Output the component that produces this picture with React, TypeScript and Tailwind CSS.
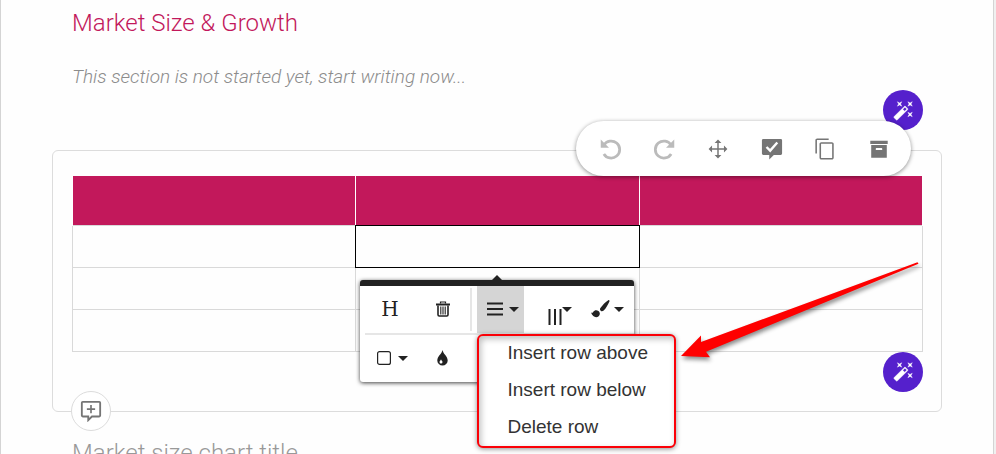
import type { ReactNode } from "react"

function Icon({ size, className, children }: { size: number; className?: string; children: ReactNode }) {
  return (
    <svg width={size} height={size} viewBox="0 0 24 24" fill="currentColor" className={className} aria-hidden="true">
      {children}
    </svg>
  )
}

function Caret() {
  return (
    <svg width="10" height="5" viewBox="0 0 10 5" fill="currentColor" aria-hidden="true">
      <path d="M0 0h10L5 5z" />
    </svg>
  )
}

function WandButton({ className }: { className: string }) {
  return (
    <button
      type="button"
      aria-label="Writing assistant"
      className={`absolute flex size-10 items-center justify-center rounded-full bg-[#5520cc] text-white ${className}`}
    >
      <Icon size={21}>
        <path
          d="M7.5 5.6 5 7l1.4-2.5L5 2l2.5 1.4L10 2 8.6 4.5 10 7 7.5 5.6M19.5 15.4 22 14l-1.4 2.5L22 19l-2.5-1.4L17 19l1.4-2.5L17 14l2.5 1.4M22 2l-1.4 2.5L22 7l-2.5-1.4L17 7l1.4-2.5L17 2l2.5 1.4L22 2M13.34 12.78l2.44-2.44-2.12-2.12-2.44 2.44 2.12 2.12M14.37 7.29l2.34 2.34c.39.37.39 1.02 0 1.41L5.04 22.71c-.39.39-1.04.39-1.41 0l-2.34-2.34c-.39-.37-.39-1.02 0-1.41L12.96 7.29c.39-.39 1.04-.39 1.41 0Z"
          stroke="currentColor"
          strokeWidth=".5"
        />
      </Icon>
    </button>
  )
}

const blockActions = [
  {
    label: "Undo",
    disabled: true,
    icon: (
      <>
        <path d="M4.2 7.8A9.300 9.300 0 1 1 4.200 17.400" fill="none" stroke="currentColor" strokeWidth="3" />
        <path d="M.8 1.500v9h9z" />
      </>
    ),
  },
  {
    label: "Redo",
    disabled: true,
    icon: (
      <>
        <path d="M19.8 7.8A9.300 9.300 0 1 0 19.800 17.400" fill="none" stroke="currentColor" strokeWidth="3" />
        <path d="M23.200 1.500v9h-9z" />
      </>
    ),
  },
  {
    label: "Move",
    icon: (
      <path d="M12.800 5.500v5.700h5.700V8.300L22.250 12l-3.750 3.700v-2.900h-5.700v5.700h2.900L12 22.250 8.300 18.500h2.900v-5.700H5.500v2.900L1.750 12 5.500 8.300v2.900h5.700V5.500H8.300L12 1.750l3.700 3.750z" />
    ),
  },
  {
    label: "Mark as done",
    icon: (
      <>
        <path d="M2.500 1h19a1.500 1.500 0 0 1 1.500 1.500v14.500a1.500 1.500 0 0 1-1.500 1.500H14L9 23.500v-5H2.500A1.500 1.500 0 0 1 1 17V2.500A1.500 1.500 0 0 1 2.500 1z" />
        <path d="m6 9.800 4 4 7.800-8.800" fill="none" stroke="#fff" strokeWidth="2.600" />
      </>
    ),
  },
  {
    label: "Copy",
    icon: (
      <path d="M16 .5H3.500c-1.100 0-2 .9-2 2V17h1.700V2.200H16V.5zm3.500 4H8c-1.100 0-2 .9-2 2V21.500c0 1.100.9 2 2 2h11.500c1.100 0 2-.9 2-2v-15c0-1.100-.9-2-2-2zm.3 17.300H7.700V6.200h12.100v15.600z" />
    ),
  },
  {
    label: "Archive",
    icon: (
      <path d="M2.500 3h19v3.500h-19V3m1 4.700h17V21.500h-17V7.700m5.500 3.300a.5.5 0 0 0-.5.5V13h7v-1.500a.5.5 0 0 0-.5-.5h-6Z" />
    ),
  },
]

function BlockToolbar() {
  return (
    <div
      role="toolbar"
      aria-label="Block actions"
      className="absolute -top-[30px] right-[30px] z-10 flex h-[55px] w-[335px] items-center justify-around rounded-full bg-white pr-[5px] pl-2 shadow-[0_1px_4px_rgba(0,0,0,0.45)]"
    >
      {blockActions.map((action) => (
        <button
          key={action.label}
          type="button"
          aria-label={action.label}
          disabled={action.disabled}
          className="flex size-8 items-center justify-center text-[#757575] disabled:text-[#bbbbbb]"
        >
          <Icon size={22}>{action.icon}</Icon>
        </button>
      ))}
    </div>
  )
}

function RowMenu() {
  return (
    <div className="absolute top-12 left-[117px] z-20">
      <div
        role="menu"
        className="flex w-[199px] flex-col gap-[7px] rounded-md border-2 border-[#fb0007] bg-white pt-[2px] pb-1 shadow-[0_1px_5px_rgba(0,0,0,0.45),inset_2px_3px_6px_rgba(0,0,0,0.25)]"
      >
        {["Insert row above", "Insert row below", "Delete row"].map((item) => (
          <button
            key={item}
            type="button"
            role="menuitem"
            className="h-[30px] pl-7 text-left font-['Liberation_Sans',Arial,sans-serif] text-[19px] leading-[30px] text-[#333]"
          >
            {item}
          </button>
        ))}
      </div>
      {/* Pointer to the menu */}
      <svg
        width="240"
        height="98"
        viewBox="0 0 240 98"
        className="pointer-events-none absolute -top-[73px] left-[204px] drop-shadow-[1px_3px_2px_rgba(0,0,0,0.45)]"
        aria-hidden="true"
      >
        <path d="M0 95 20 74.500v6.500L236.500 1.200l1 1.500L25 90.700l4 5.600z" fill="#fe0000" />
      </svg>
    </div>
  )
}

function TablePopup() {
  return (
    <div className="absolute inset-x-0 top-[54px] z-10 flex justify-center">
      <div
        role="toolbar"
        aria-label="Table"
        className="relative w-[274px] shrink-0 rounded-[3px] border-t-[6px] border-[#222] bg-white text-[#222] shadow-[0_1px_4px_rgba(0,0,0,0.75)]"
      >
        <svg width="10" height="5" viewBox="0 0 10 5" className="absolute -top-[11px] left-[132px]" aria-hidden="true">
          <path d="M0 5 5 0l5 5z" fill="#222" />
        </svg>

        <div className="flex h-[47px]">
          <button type="button" aria-label="Table header" className="w-[59px] font-['DejaVu_Serif',serif] text-xl">
            H
          </button>
          <button type="button" aria-label="Remove table" className="flex w-[47px] items-center justify-center">
            <svg width="14" height="16" viewBox="0 0 14 16" fill="none" stroke="currentColor" aria-hidden="true">
              <path d="M4.500 2.500V1h5v1.500" strokeWidth="1.200" />
              <path d="M0 3.500h14" strokeWidth="2" />
              <path d="M2 4.500v9.300q0 1.200 1.200 1.200h7.600q1.200 0 1.200-1.200V4.500" strokeWidth="1.600" />
              <path d="M4.800 5.500v8M7 5.500v8M9.200 5.500v8" strokeWidth="1.100" />
            </svg>
          </button>
          <div className="my-[2px] mr-[5px] ml-1 w-[2px] bg-[#e6e6e6]" />
          <button
            type="button"
            aria-label="Row"
            aria-expanded="true"
            className="flex w-[47px] items-center justify-center gap-[6px] bg-[#d5d5d5] pl-[5px]"
          >
            <svg width="16" height="14" viewBox="0 0 16 14" aria-hidden="true">
              <path d="M0 1.500h16M0 7h16M0 12.500h16" stroke="currentColor" strokeWidth="2.200" />
            </svg>
            <Caret />
          </button>
          <button type="button" aria-label="Column" className="ml-6 flex w-[28px] items-center">
            <svg width="14" height="16" viewBox="0 0 14 16" className="mt-4" aria-hidden="true">
              <path d="M1.500 0v16M7 0v16M12.500 0v16" stroke="currentColor" strokeWidth="2" />
            </svg>
            <Caret />
          </button>
          <button type="button" aria-label="Table style" className="ml-[14px] flex items-center gap-1">
            <svg width="20" height="18" viewBox="0 0 20 18" fill="currentColor" aria-hidden="true">
              <path d="M18.300.2c.8-.4 1.500.3 1.100 1.200-1.200 2.900-3.500 6.900-5.700 9.100-1.100 1-2.100 1.100-3 .3s-1-1.900-.1-3.100C12.600 5 15.600 1.800 18.300.2z" />
              <path d="M1 12.600c.9.500 1.700.300 2.200-.6 1.100-1.900 3.500-2.300 5.200-1 1.800 1.400 1.900 3.700.3 5.200C6.500 18.200 2.600 17.400 1 12.600z" />
            </svg>
            <Caret />
          </button>
        </div>

        <div className="ml-[5px] h-[2px] bg-[#e6e6e6]" />

        <div className="flex h-[47px]">
          <button type="button" aria-label="Cell" className="flex w-[59px] items-center justify-center gap-[7px] pl-[6px]">
            <svg width="14" height="14" viewBox="0 0 14 14" aria-hidden="true">
              <rect x=".6" y=".6" width="12.800" height="12.800" rx="2" fill="none" stroke="currentColor" strokeWidth="1.200" />
            </svg>
            <Caret />
          </button>
          <button type="button" aria-label="Cell background" className="flex w-[46px] items-center justify-center">
            <svg width="11" height="16" viewBox="0 0 11 16" aria-hidden="true">
              <path d="M5.500 0c.6 3.800 5.200 6.300 5.200 10.400a5.200 5.200 0 0 1-10.400 0C.3 6.300 4.900 3.800 5.500 0z" fill="currentColor" />
              <path d="M4 9.200c.2 1.200 1.500 1.700 1.500 2.900a1.500 1.500 0 0 1-3 0C2.500 10.900 3.800 10.400 4 9.200z" fill="#fff" />
            </svg>
          </button>
        </div>

        <RowMenu />
      </div>
    </div>
  )
}

export default function App() {
  return (
    <div className="h-screen overflow-hidden bg-[#f0f0f0] pr-[2px] font-[Roboto,sans-serif]">
      <main className="min-h-full border-x border-[#d4d4d4] bg-[#fefefe] px-[51px] pt-2">
        <h2 className="pl-5 text-2xl leading-[30px] font-light text-[#c2185b]">Market Size &amp; Growth</h2>
        <p className="mt-[25px] pl-5 text-[19px] leading-7 font-light text-[#8c8c8c] italic">
          This section is not started yet, start writing now...
        </p>

        <section className="relative mt-[59px] rounded-md border border-[#dcdcdc] pt-[25px] pr-[18px] pb-[59px] pl-[19px]">
          <WandButton className="-top-[61px] right-[18px]" />
          <BlockToolbar />

          <table className="w-full table-fixed border-collapse">
            <thead>
              <tr className="h-[49px] bg-[#c2185b]">
                {["Column 1", "Column 2", "Column 3"].map((name) => (
                  <th key={name} aria-label={name} className="border-x border-white" />
                ))}
              </tr>
            </thead>
            <tbody>
              {[0, 1, 2].map((row) => (
                <tr key={row} className="h-[42px]">
                  {[0, 1, 2].map((col) => (
                    <td key={col} className="border border-[#d9d9d9] p-0">
                      {row === 0 && col === 1 && (
                        <div className="relative h-[41px]">
                          <div className="absolute -inset-px border border-black" />
                          <TablePopup />
                        </div>
                      )}
                    </td>
                  ))}
                </tr>
              ))}
            </tbody>
          </table>

          <WandButton className="right-[18px] bottom-[19px]" />
          <button
            type="button"
            aria-label="Add comment"
            className="absolute -bottom-5 left-[18px] flex size-10 items-center justify-center rounded-full border border-[#dcdcdc] bg-white text-[#757575]"
          >
            <Icon size={22}>
              <path
                d="M3 2h18q1 0 1 1v14q0 1-1 1h-8l-4 4v-4H3q-1 0-1-1V3q0-1 1-1z"
                fill="none"
                stroke="currentColor"
                strokeWidth="2"
              />
              <path d="M12 5.500v9M7.500 10h9" stroke="currentColor" strokeWidth="1.800" />
            </Icon>
          </button>
        </section>

        <h2 className="mt-[26px] pl-5 text-2xl leading-[30px] font-light text-[#999]">Market size chart title</h2>
      </main>
    </div>
  )
}
